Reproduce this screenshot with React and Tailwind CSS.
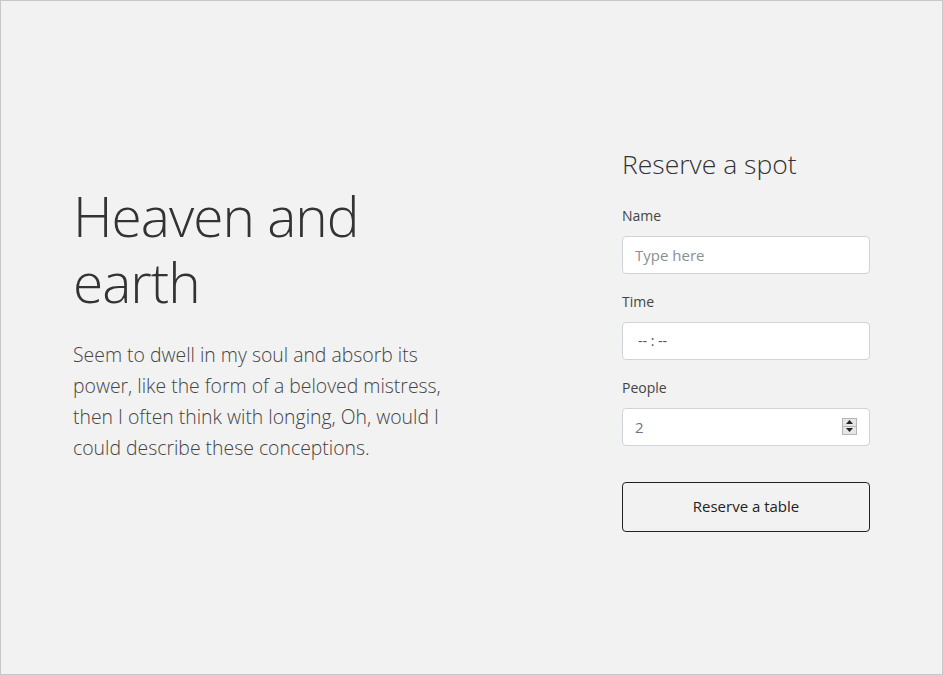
import { useState } from "react";

export default function App() {
  const [people, setPeople] = useState(2);

  const font = { fontFamily: '"Open Sans", "Noto Sans", sans-serif' };

  return (
    <div
      className="h-[675px] w-full border border-[#c8c8c8] bg-[#f2f2f2] text-[#333] flex items-center justify-between pl-[72px] pr-[72px]"
      style={font}
    >
      {/* Intro */}
      <div className="w-[385px] mb-[30px]">
        <h1 className="text-[55px] leading-[66px] font-light text-[#333] tracking-[-1px]">
          Heaven and earth
        </h1>
        <p className="mt-[24px] text-[19.4px] leading-[31px] font-light text-[#444]">
          Seem to dwell in my soul and absorb its power, like the form of a beloved mistress, then I often think with
          longing, Oh, would I could describe these conceptions.
        </p>
      </div>

      {/* Reservation form */}
      <form className="w-[248px] mt-[2px]" onSubmit={(e) => e.preventDefault()}>
        <h2 className="text-[26.5px] leading-[36px] font-light text-[#333]">Reserve a spot</h2>

        <label htmlFor="name" className="block mt-[24px] text-[14px] leading-[20px] text-[#444]">
          Name
        </label>
        <input
          id="name"
          type="text"
          placeholder="Type here"
          className="mt-[10px] block w-full h-[38px] px-[12px] rounded-[4px] border border-[#ced4da] bg-white text-[15px] text-[#495057] placeholder:text-[#8a8f94] focus:outline-none"
        />

        <label htmlFor="time" className="block mt-[18px] text-[14px] leading-[20px] text-[#444]">
          Time
        </label>
        <div
          id="time"
          className="mt-[10px] flex items-center w-full h-[38px] px-[15px] rounded-[4px] border border-[#ced4da] bg-white text-[14px] text-[#555]"
        >
          -- : --
        </div>

        <label htmlFor="people" className="block mt-[18px] text-[14px] leading-[20px] text-[#444]">
          People
        </label>
        <div className="relative mt-[10px]">
          <input
            id="people"
            type="text"
            inputMode="numeric"
            value={people}
            onChange={(e) => setPeople(e.target.value)}
            className="block w-full h-[38px] px-[12px] rounded-[4px] border border-[#ced4da] bg-white text-[15px] text-[#6c757d] focus:outline-none"
          />
          {/* spinner */}
          <div className="absolute right-[13px] top-[10px] w-[15px] h-[17px] flex flex-col border border-[#b5b5b5] bg-[#e6e6e6]">
            <button
              type="button"
              onClick={() => setPeople(Number(people) + 1)}
              className="flex-1 flex items-center justify-center border-b border-[#b5b5b5]"
            >
              <svg width="7" height="4" viewBox="0 0 7 4">
                <path d="M3.5 0L7 4H0z" fill="#222" />
              </svg>
            </button>
            <button
              type="button"
              onClick={() => setPeople(Math.max(1, Number(people) - 1))}
              className="flex-1 flex items-center justify-center"
            >
              <svg width="7" height="4" viewBox="0 0 7 4">
                <path d="M0 0h7L3.5 4z" fill="#222" />
              </svg>
            </button>
          </div>
        </div>

        <button
          type="submit"
          className="mt-[36px] w-full h-[50px] rounded-[4px] border border-[#222] bg-transparent text-[15px] text-[#222]"
        >
          Reserve a table
        </button>
      </form>
    </div>
  );
}
